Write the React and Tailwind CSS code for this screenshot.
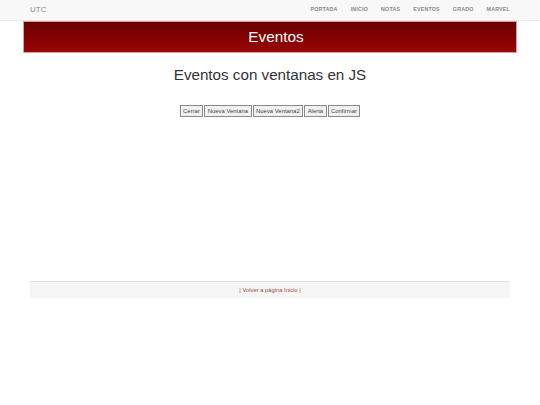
export default function App() {
    const links = ['PORTADA', 'INICIO', 'NOTAS', 'EVENTOS', 'GRADO', 'MARVEL'];
    const buttons = ['Cerrar', 'Nueva Ventana', 'Nueva Ventana2', 'Alerta', 'Confirmar'];

    return (
        <div className="min-h-[405px] bg-white" style={{ fontFamily: '"Liberation Sans", Arial, sans-serif' }}>
            {/* Navbar */}
            <nav className="h-[21px] bg-[#f8f8f8] border-b border-[#ececec] flex items-center justify-between pl-[30px] pr-[30px]">
                <span className="text-[8px] text-[#888]">UTC</span>
                <ul className="flex gap-[13px]">
                    {links.map((l) => (
                        <li key={l} className="text-[5.3px] font-bold text-[#888] tracking-[0.2px]">{l}</li>
                    ))}
                </ul>
            </nav>

            {/* Header */}
            <div className="mx-[23px] h-[32px] bg-gradient-to-b from-[#6a0000] to-[#9a0606] border border-[#d9a0a0] flex items-center justify-center pl-[12px]">
                <h1 className="text-[15.3px] text-white">Eventos</h1>
            </div>

            {/* Content */}
            <h2 className="text-center text-[15.2px] text-[#333] mt-[12px] leading-[20px]">Eventos con ventanas en JS</h2>

            <div className="flex justify-center mt-[20px] gap-px">
                {buttons.map((b) => (
                    <button key={b} className="h-[12px] px-[2.5px] text-[5.9px] leading-[10px] text-[#444] bg-[#f0f0f0] border border-[#8a8a8a]">
                        {b}
                    </button>
                ))}
            </div>

            {/* Footer */}
            <div className="mx-[30px] mt-[164px] h-[17px] bg-[#f5f5f5] border-t border-[#e3e3e3] flex items-center justify-center">
                <a className="text-[5.8px] text-[#a94442]">| Volver a página Inicio |</a>
            </div>
        </div>
    );
}
